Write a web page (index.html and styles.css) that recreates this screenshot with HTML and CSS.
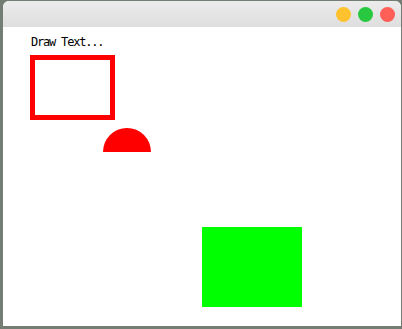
FILE: index.html
```html
<!DOCTYPE html>
<html lang="en">
<head>
	<meta charset="UTF-8">
	<title>draw</title>
	<link rel="stylesheet" href="styles.css">
</head>
<body>
	<div class="window">
		<div class="titlebar">
			<span class="light yellow"></span>
			<span class="light green"></span>
			<span class="light red"></span>
		</div>
		<div class="canvas">
			<svg width="397" height="299" viewBox="0 0 397 299">
				<text x="28" y="19" class="label">Draw Text...</text>
				<rect x="29.5" y="30.5" width="80" height="60" fill="none" stroke="#ff0000" stroke-width="5"/>
				<path d="M100 125 A24 24 0 0 1 148 125 Z" fill="#ff0000"/>
				<rect x="199" y="200" width="100" height="80" fill="#00ff00"/>
			</svg>
		</div>
	</div>
</body>
</html>
```

FILE: styles.css
```css
*{
  padding: 0;
  margin: 0;
  box-sizing: border-box;
}

body{
  width: 402px;
  height: 329px;
  background: #747d74;
  padding: 1px 1px 3px 3px;
  overflow: hidden;
}

.window{
  height: 100%;
  display: flex;
  flex-direction: column;
  background: #fff;
  border-radius: 6px 6px 0 0;
  overflow: hidden;
}

.titlebar{
  height: 26px;
  flex: none;
  display: flex;
  justify-content: flex-end;
  align-items: center;
  gap: 7px;
  padding-right: 6px;
  background: linear-gradient(#ececec, #dedede);
}

.light{
  width: 15px;
  height: 15px;
  border-radius: 50%;
}

.yellow{
  background: #fec22e;
}

.green{
  background: #28c840;
}

.red{
  background: #fe5f57;
}

.canvas{
  flex: 1;
  background: #fff;
}

.canvas svg{
  display: block;
}

.label{
  font-family: "DejaVu Sans Mono", monospace;
  font-size: 12px;
  letter-spacing: -1.2px;
  fill: #000;
}
```
